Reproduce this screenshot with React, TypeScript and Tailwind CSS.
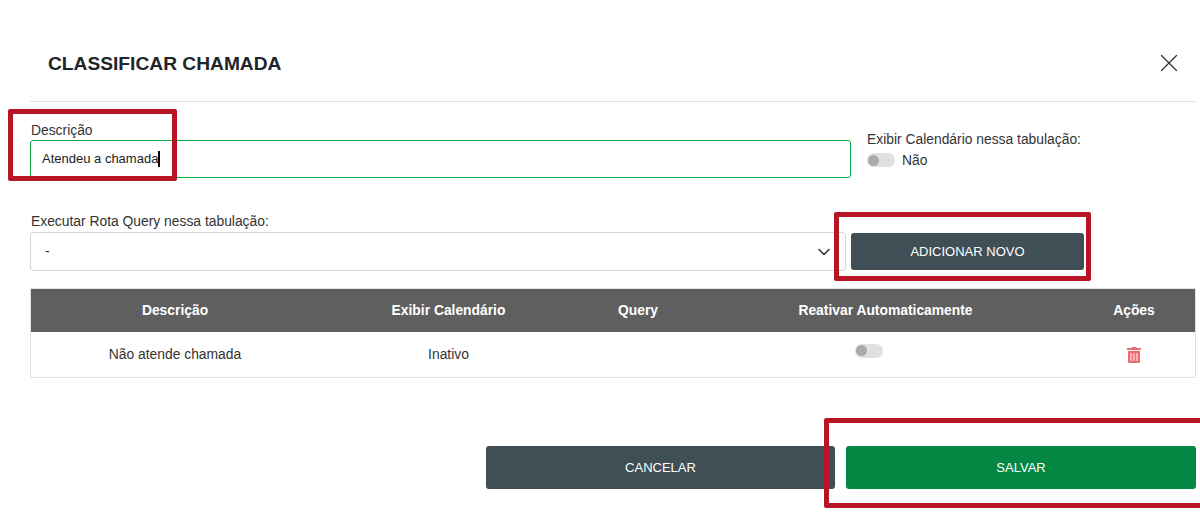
import { ChevronDown, X } from "lucide-react";
import { FaTrashAlt } from "react-icons/fa";

function Toggle() {
  return (
    <span className="flex h-[14px] w-[28px] items-center rounded-full bg-[#e0e0e0]">
      <span className="ml-px h-[11px] w-[11px] rounded-full bg-[#aaaaaa]" />
    </span>
  );
}

function Callout({ className }: { className: string }) {
  return <div className={`absolute rounded-[2px] border-[5px] border-[#b71425] ${className}`} />;
}

const cols = "grid grid-cols-[288px_259px_120px_375px_1fr] items-center text-center";

export default function App() {
  return (
    <div className="relative h-[518px] w-[1200px] overflow-hidden bg-white pl-[30px] pr-1 font-['Liberation_Sans',Arial,sans-serif] text-[13.85px] text-[#333333]">
      <header className="flex h-[102px] items-center justify-between border-b border-[#e2e2e2] pl-[18px] pr-[12px] pt-[24px]">
        <h1 className="pt-[4px] text-[19.2px] font-bold text-[#212529]">CLASSIFICAR CHAMADA</h1>
        <X size={30} strokeWidth={1} className="text-[#333333]" />
      </header>

      <section className="mt-[20px] flex">
        <div className="w-[821px]">
          <label className="block h-[18px] pl-px leading-[16px]">Descrição</label>
          <div className="flex h-[38px] items-center rounded-[3px] border border-[#0aa83f] pl-[11px] text-[13px] text-[#222222]">
            <span>Atendeu a chamada</span>
            <span className="h-[16px] w-[2px] bg-black" />
          </div>
        </div>
        <div className="ml-[16px] pt-[9px]">
          <p className="leading-[16px]">Exibir Calendário nessa tabulação:</p>
          <div className="mt-[5px] flex items-center gap-[7px]">
            <Toggle />
            <span className="leading-[16px]">Não</span>
          </div>
        </div>
      </section>

      <section className="mt-[35px]">
        <label className="block h-[19px] pl-px leading-[16px]">Executar Rota Query nessa tabulação:</label>
        <div className="flex items-center">
          <div className="flex h-[39px] w-[816px] items-center justify-between rounded-[4px] border border-[#d5d5d8] pl-[14px] pr-[11px] text-[#333333]">
            <span>-</span>
            <ChevronDown size={20} strokeWidth={1.9} className="text-[#333333]" />
          </div>
          <button className="ml-[5px] h-[37px] w-[233px] rounded-[3px] bg-[#404f56] text-[13px] text-white">ADICIONAR NOVO</button>
        </div>
      </section>

      <section className="mt-[17px] border border-[#e2e2e2]">
        <div className={`${cols} h-[43px] bg-[#5f5f5f] font-bold text-white`}>
          <span>Descrição</span>
          <span>Exibir Calendário</span>
          <span>Query</span>
          <span>Reativar Automaticamente</span>
          <span>Ações</span>
        </div>
        <div className={`${cols} h-[45px]`}>
          <span>Não atende chamada</span>
          <span>Inativo</span>
          <span />
          <span className="flex justify-center pb-[8px] pr-[34px]"><Toggle /></span>
          <span className="flex justify-center"><FaTrashAlt size={16} className="text-[#ee6a72]" /></span>
        </div>
      </section>

      <footer className="mt-[68px] flex justify-end gap-[11px]">
        <button className="h-[43px] w-[349px] rounded-[3px] bg-[#404f56] text-[13px] text-white">CANCELAR</button>
        <button className="h-[43px] w-[350px] rounded-[3px] bg-[#048742] text-[13px] text-white">SALVAR</button>
      </footer>

      <Callout className="left-[8px] top-[109px] h-[72px] w-[169px]" />
      <Callout className="left-[834px] top-[212px] h-[69px] w-[257px]" />
      <Callout className="left-[824px] top-[418px] h-[90px] w-[390px]" />
    </div>
  );
}
